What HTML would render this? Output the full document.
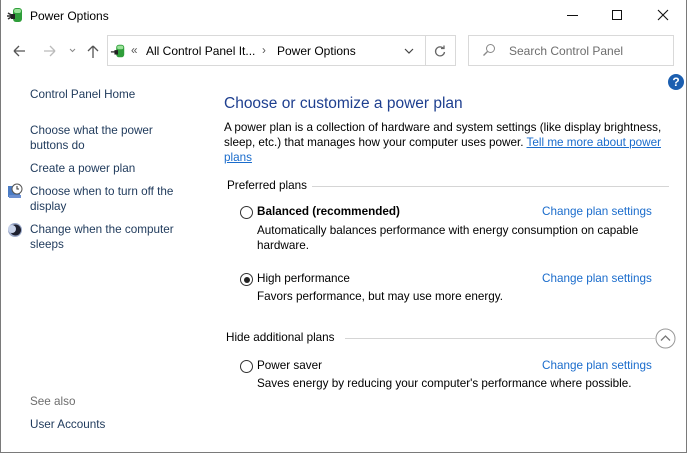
<!DOCTYPE html>
<html><head><meta charset="utf-8"><style>
*{margin:0;padding:0;box-sizing:border-box}
body{width:687px;height:453px;background:#fff;font-family:"Liberation Sans",sans-serif;font-size:11.7px;color:#000;position:relative;overflow:hidden}
.w{position:absolute;inset:0;border:1px solid #7a7a7a;border-top:none}
.t{position:absolute;white-space:nowrap;line-height:16px}
.nav{color:#1e395b}
.lk{color:#1a6ccc}
.hr{position:absolute;height:1px;background:#d5d5d5}
.rad{position:absolute;width:13px;height:13px;border:1px solid #333;border-radius:50%;background:#fff}
.rad.on::after{content:"";position:absolute;left:2.5px;top:2.5px;width:6px;height:6px;border-radius:50%;background:#222}
</style></head><body>
<div class="w"></div>
<svg style="position:absolute;left:6px;top:6px" width="18" height="18" viewBox="0 0 18 18"><rect x="7" y="2" width="9" height="14" rx="3" fill="#2f9e3a"/><rect x="8" y="3" width="7" height="4" rx="2" fill="#9be29a"/><path d="M1 10h6M2 7l5 3M2 13l5-3" stroke="#333" stroke-width="1.5"/><rect x="5" y="8" width="4" height="5" fill="#222"/></svg>
<div class="t" style="left:30px;top:8px;font-size:12px">Power Options</div>
<div style="position:absolute;left:567px;top:15px;width:11px;height:1px;background:#111"></div>
<div style="position:absolute;left:612px;top:10px;width:10px;height:10px;border:1px solid #111"></div>
<svg style="position:absolute;left:657px;top:9px" width="12" height="12"><path d="M1 1L11 11M11 1L1 11" stroke="#111" stroke-width="1.1"/></svg>
<svg style="position:absolute;left:10px;top:43px" width="100" height="16"><path d="M4 8h11M4 8l5-5M4 8l5 5" stroke="#555" stroke-width="1.3" fill="none"/><path d="M34 8h11M45 8l-5-5M45 8l-5 5" stroke="#bbb" stroke-width="1.3" fill="none"/><path d="M60 6l2.5 2.5L65 6" stroke="#888" fill="none"/><path d="M83 3v12M83 3l-5 5M83 3l5 5" stroke="#555" stroke-width="1.3" fill="none"/></svg>
<div style="position:absolute;left:107px;top:35px;width:349px;height:31px;border:1px solid #d9d9d9"></div>
<div style="position:absolute;left:425px;top:36px;width:1px;height:29px;background:#d9d9d9"></div>
<svg style="position:absolute;left:110px;top:42px" width="16" height="18" viewBox="0 0 18 18"><rect x="7" y="2" width="9" height="14" rx="3" fill="#2f9e3a"/><rect x="8" y="3" width="7" height="4" rx="2" fill="#9be29a"/><path d="M1 10h6" stroke="#333" stroke-width="1.5"/><rect x="5" y="8" width="4" height="5" fill="#222"/></svg>
<div class="t" style="left:131px;top:43px;color:#555">«</div>
<div class="t" style="left:146px;top:43px;font-size:12px">All Control Panel It...</div>
<div class="t" style="left:262px;top:43px;color:#555">›</div>
<div class="t" style="left:277px;top:43px;font-size:12px">Power Options</div>
<svg style="position:absolute;left:404px;top:47px" width="10" height="8"><path d="M1 2l4 4 4-4" stroke="#444" fill="none" stroke-width="1.2"/></svg>
<svg style="position:absolute;left:433px;top:44px" width="14" height="14"><path d="M10.5 4.5A4.5 4.5 0 1 0 11.5 8" stroke="#666" fill="none" stroke-width="1.3"/><path d="M8 4.5h3V1.5" stroke="#666" fill="none" stroke-width="1.3"/></svg>
<div style="position:absolute;left:468px;top:35px;width:206px;height:31px;border:1px solid #d9d9d9"></div>
<svg style="position:absolute;left:482px;top:43px" width="14" height="14"><circle cx="8.5" cy="5.5" r="4" stroke="#888" fill="none"/><path d="M5.5 8.5L1.5 12.5" stroke="#888" stroke-width="1.3"/></svg>
<div class="t" style="left:509px;top:43px;font-size:12px;color:#6d6d6d">Search Control Panel</div>
<div style="position:absolute;left:668px;top:74px;width:16px;height:16px;border-radius:50%;background:#1c5fb0;color:#fff;font-weight:bold;font-size:12px;text-align:center;line-height:16px">?</div>
<div class="t nav" style="left:30px;top:87px">Control Panel Home</div>
<div class="t nav" style="left:30px;top:123px">Choose what the power</div>
<div class="t nav" style="left:30px;top:138px">buttons do</div>
<div class="t nav" style="left:30px;top:161px">Create a power plan</div>
<svg style="position:absolute;left:7px;top:183px" width="16" height="16"><rect x="1" y="3" width="12" height="11" fill="#4a7bc4"/><rect x="2" y="12" width="12" height="3" fill="#6c8fd0"/><circle cx="10" cy="6" r="5" fill="#fff" stroke="#555"/><path d="M10 3v3h2" stroke="#333" fill="none"/></svg>
<div class="t nav" style="left:30px;top:184px">Choose when to turn off the</div>
<div class="t nav" style="left:30px;top:199px">display</div>
<svg style="position:absolute;left:7px;top:222px" width="16" height="16"><circle cx="8" cy="8" r="7" fill="#9aa8c8"/><circle cx="8.5" cy="8" r="5.5" fill="#1e2130"/><circle cx="5" cy="7" r="4" fill="#c8d3ea"/></svg>
<div class="t nav" style="left:30px;top:222px">Change when the computer</div>
<div class="t nav" style="left:30px;top:237px">sleeps</div>
<div class="t" style="left:30px;top:394px;color:#6d6d6d">See also</div>
<div class="t nav" style="left:30px;top:417px">User Accounts</div>
<div class="t" style="left:224px;top:95px;font-size:15.5px;color:#1e3f8f;line-height:18px">Choose or customize a power plan</div>
<div class="t" style="left:224px;top:120px">A power plan is a collection of hardware and system settings (like display brightness,</div>
<div class="t" style="left:224px;top:135px">sleep, etc.) that manages how your computer uses power. <span class="lk" style="text-decoration:underline">Tell me more about power</span></div>
<div class="t lk" style="left:224px;top:150px;text-decoration:underline">plans</div>
<div class="t" style="left:227px;top:178px">Preferred plans</div>
<div class="hr" style="left:312px;top:186px;width:357px"></div>
<div class="rad" style="left:240px;top:206px"></div>
<div class="t" style="left:257px;top:204px;font-weight:bold">Balanced (recommended)</div>
<div class="t lk" style="left:542px;top:204px">Change plan settings</div>
<div class="t" style="left:257px;top:223px">Automatically balances performance with energy consumption on capable</div>
<div class="t" style="left:257px;top:238px">hardware.</div>
<div class="rad on" style="left:240px;top:273px"></div>
<div class="t" style="left:257px;top:271px">High performance</div>
<div class="t lk" style="left:542px;top:271px">Change plan settings</div>
<div class="t" style="left:257px;top:289px">Favors performance, but may use more energy.</div>
<div class="t" style="left:226px;top:330px">Hide additional plans</div>
<div class="hr" style="left:345px;top:338px;width:310px"></div>
<svg style="position:absolute;left:655px;top:328px" width="21" height="21"><circle cx="10.5" cy="10.5" r="9.5" fill="#fff" stroke="#999"/><path d="M6 12.5l4.5-4.5 4.5 4.5" stroke="#777" fill="none" stroke-width="1.3"/></svg>
<div class="rad" style="left:240px;top:360px"></div>
<div class="t" style="left:257px;top:358px">Power saver</div>
<div class="t lk" style="left:542px;top:358px">Change plan settings</div>
<div class="t" style="left:257px;top:376px">Saves energy by reducing your computer's performance where possible.</div>
</body></html>
